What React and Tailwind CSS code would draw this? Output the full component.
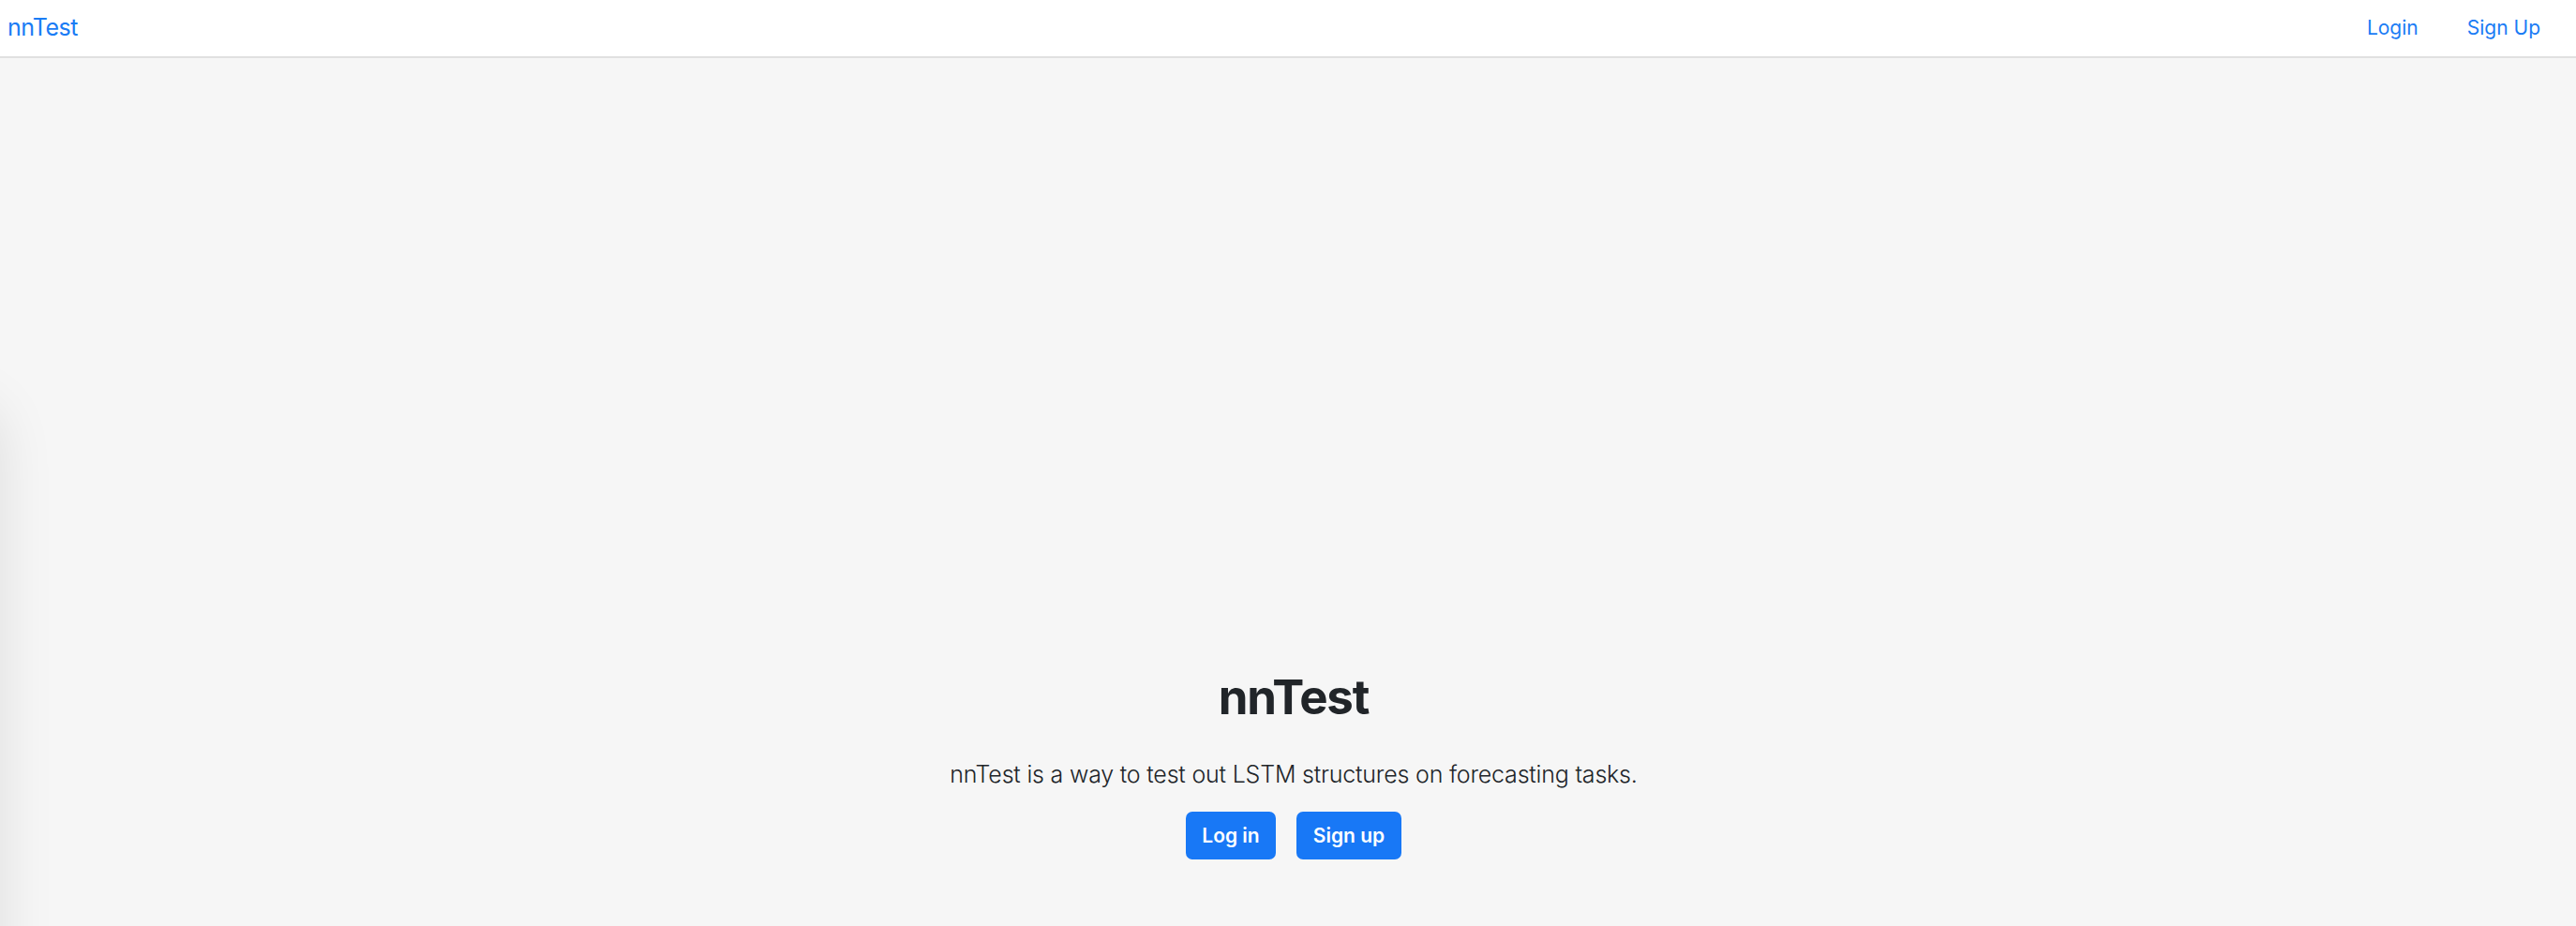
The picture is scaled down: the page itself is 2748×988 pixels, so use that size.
import React from 'react';

const App = () => {
  return (
    <div
      className="relative min-h-[988px] flex flex-col bg-[#f6f6f6] overflow-hidden"
      style={{ fontFamily: 'Inter, "Noto Sans", sans-serif' }}
    >
      {/* Navbar */}
      <nav className="h-[62px] bg-white border-b-2 border-[#e0e0e0] flex items-center justify-between pl-[8px] pr-[38px]">
        <a href="#" className="text-[25px] text-[#1a7cf5] tracking-[-0.5px] leading-none pb-[2px]">nnTest</a>
        <div className="flex items-center gap-[52px]">
          <a href="#" className="text-[21px] text-[#1a7cf5] leading-none pb-[2px]">Login</a>
          <a href="#" className="text-[21px] text-[#1a7cf5] leading-none pb-[2px]">Sign Up</a>
        </div>
      </nav>

      {/* Hero */}
      <main className="flex-1 flex flex-col items-center justify-end pl-[12px] pb-[71px]">
        <h1 className="text-[51px] font-bold text-[#212529] leading-none tracking-[-1.2px]">nnTest</h1>
        <p className="mt-[45px] text-[25px] font-light text-[#212529] leading-none tracking-[-0.2px]">
          nnTest is a way to test out LSTM structures on forecasting tasks.
        </p>
        <div className="mt-[27px] flex gap-[22px]">
          <button className="h-[51px] w-[96px] rounded-[7px] bg-[#1878f6] text-white text-[21px] font-semibold">Log in</button>
          <button className="h-[51px] w-[112px] rounded-[7px] bg-[#1878f6] text-white text-[21px] font-semibold">Sign up</button>
        </div>
      </main>

      {/* shadow from offscreen drawer */}
      <div className="absolute left-[-120px] top-[430px] h-[700px] w-[120px] rounded-[40px] bg-white shadow-[0_0_60px_rgba(0,0,0,0.1)]" />
    </div>
  );
};

export default App;
